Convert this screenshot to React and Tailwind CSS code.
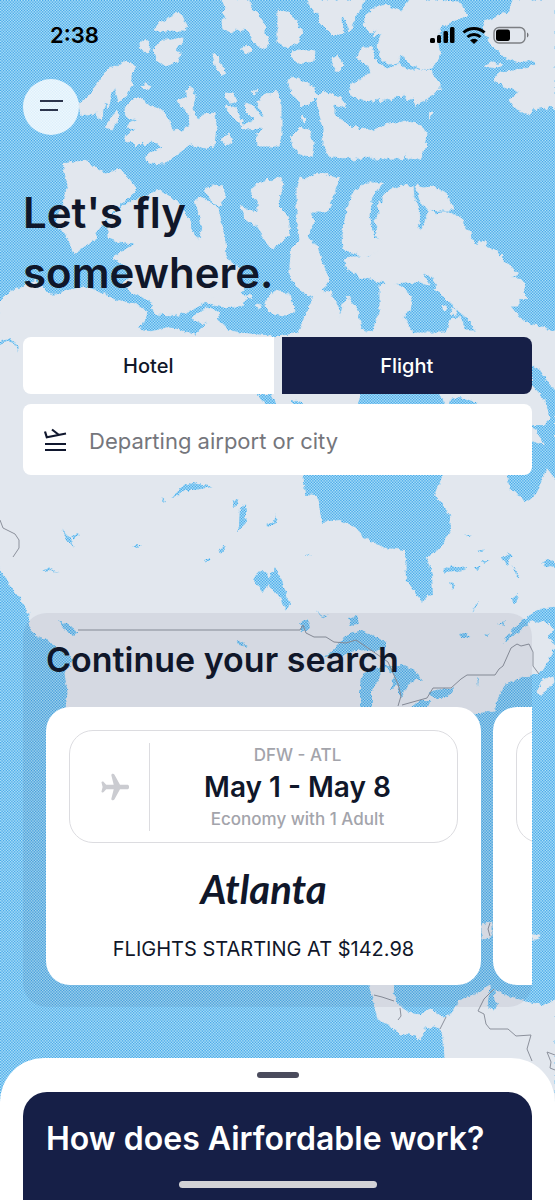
import { useState } from 'react'

const ISLANDS = [
  'M154 30l4-5 2-3 7-2 6-3 2-4 4-1 3 4 4 8-2 7-6 0-6-1-6 1-6 1z',
  'M140 44l5-4 6 8-4 5-6-4z',
  'M154 47l9-7 8 0 12-2-1 5-7 5 5 6-2 7-12 5-9-6z',
  'M222 0l4 9-4 4 4 5-4 3 1 8 9 3 5-3 4 2 4-3 5 5 2 7 5 5 9 4 3-5-4-10 0-9-8-12-5-1-3-12z',
  'M213 52l5 5 2 6 6 10-4 2-4-4-3-5z',
  'M241 49l6-3 5 5-5 3z',
  'M79 103l9-5 6-10 5-6 4-8 6-6 11-3 6-5 3 3 7 4-5 7 0 6 2 6-5 6-5 7-5 3-2-7 0-8-4 5-2 9-2 7-2-6-3 6-1 11-4-1-1-6-6 3-5-2-5 4z',
  'M105 127l7-10 5-6 2 4-3 7-4 7z',
  'M142 86l5-2 5 3-6 3z',
  'M125 110l3-6 5-5 8-2 7 8 9 2 9 8 3 5 3 10 10 1 8-5-1-14-8-6-3-6 9-3 0-7 4-4 4 12-3 12 6 9 7-5 10-1 1 12-2 21-9 2-15-4-14 11-11 9-17-1-2-8 17-8-13-7-5 6-3-5-5 5-5-5-5 1-3-6 14-8-11-1 3-4 9-3-11-2z',
  'M225 93l8 1 4 7-7 2z M226 106l10 2 5 12 5 8-8-6-8-8z M245 103l7 2 10 13-7 2-8-8z M252 92l6-3-4 7z',
  'M262 96l5-3 4 2 4-4 4 5 2 8 0 30-2 12-21 0-1-12 6-6-18 1-5-2 18-8 6-3-8-14 5 0z',
  'M224 136l5-3 3 9-6 4-4-5z',
  'M278 10l12 3 12 19-4 10-11 6-9-6z',
  'M308 0l3 8 9 7-1 7 14 14 10-3-1-15 4 2 4 12 3-10 8-14 4-8z',
  'M363 25l3-9 6-7 13-4 17 7 3-6 5-6 32 0 20 4 5 11-12 5-8 4-7 4-2 16 2 11-8 13-9 1-10-3-6-6-6-5-3 8-10 1-8-7-2-13 4-11-7 3-2-3 6-4-9 3z',
  'M357 58l5-11 9 0 5 15 11 7 13-5 10 6 20 0 4 7 6 6 0 7-6 3-4 5-9 4-5 4-3-8-6 2-3-7-3 5-5-3-4 5-6-3-4 5-4-4-5 3-10-1-12-4-1-10 11-7 10-6-2-7z',
  'M292 52l7-2 16 2-1 9-12 2-9-3z M332 58l6-2 6 10-5 5-5-3z M288 80l10-2 15 9 4 9-8 8-7 1-10-12z',
  'M316 96l9-4 15 6 7 9-13-3 0 10 13 10 5 5 4-4 3 6 3-3 10 3 13-6 18-4 14 3 10 9-2 15-5 11-12-1-2-5-3 6-10-1-21 1-2-3-17 4-2-4-8 2-14-3-6-12 0-15-5-20z',
  'M291 137l9-9 9 2 5 17-2 10-8-1-11-9z M303 116l3 3-1 4-3-3z M430 112l3-1-4 8z',
  'M555 0l-42 0-3 10-15 8-11 4 1 13 7 10 8 7 5 6 15 4 13-2 3 5-11 3-13 3-12 1-6 8 11 6 15 6-11 8 6 8 15 7 4-9 3 5 5-6 4 5 5-4 4 4z',
  'M485 66l8-3 9 2-7 3z',
  'M63 164l12-2 13-1 5 6 12 7 15-5 8 9 9 11-7 7-10 9-10 10-13 15-2 10-12 7-8 7-5-11-5-10-10-8 7-20 6-20z',
  'M120 208l20-10 20-8 20 15 10 15 4 15 6 5 2-15-7-25 5-4 12 9 6 3 7 32 1 18 14 12 4 20-9 8-20-1-20 11-17 7-23-1-5-14-15-6-13-9 11-10-13-13-7-4 12-8 10-6-17-2-10-5 0-17z',
  'M205 190l7-5 10 1 3 9-4 11-8-3z',
  'M240 205l6 5 12 2 0-9-7-13 9-8 3 2 4-5 3 3 8-6 6 9-4 10-2 10 10 10 2 20-12 8-6 7-7-10-7-12-13-10z',
  'M205 302l12-6 22-6 7 8-4 7-16 3-7-2z M277 290l13 5 5 15-10 6-12-2-8-8 4-10z M192 318l14-10 14 4-4 8-14 4z',
  'M297 187l3-10 5 3 12-7 9 1 13 5-6 18-6 15-17 0 4 9-7 15 10 11 5 16 7 15-7 12-10 7-12-8-10-12 0-12 2-17 8-8-3-25z',
  'M342 235l5-25 8-20 12-7 17 0-11 12-4 20 4 20 12 12-12 8-11 2-7-4-12-4z',
  'M378 201l4 3 0-8 8-6 12-5 11 2 1 11 6 17-2 15 6-4 2-9 4-6 7 4 3-3 10 0 12 8 2 7 6 5 1 8 7 5 1-4 6 1 1 5 9 3 4 7 4-2-1 7 9 4 6 9-6 4 8-1 6 6-2 9 5 5-10 1 0 7-8 0 10 12 10 6 15 4 5 9 0 3-70 0-5-15-15-13-13-12-9-10-5-12-11-6 8 13-15-3-20 2-20-4-15-3-13-9-3-8 8-3 18 0 10-7 0-10-5-6 4-7-4-7 4-5z',
  'M416 185l7 3 12-1 12 8 7 15-14 0-12 1-8-11z',
  'M456 296l5-3 2 6-5 2z M442 305l5 2-2 5z M434 290l5-3 2 6z M452 308l4 2 0 5-5-1z M470 322l8 3-3 5z M245 296l4-2 3 4z M255 306l4-2 2 5z',
  'M537 690l6-10 10-3 1 5-8 9-6 4z',
  'M482 925l10-3 0 15-10 1z M532 935l8 0-2 4-6 0z',
  'M368 980l26 0-1 15 6 10 9 8 12 2 10-6 12 8 8-2 12-17 13-3 15-10 0 5-5 5 10-5 15 8 10 2 10 3 15 2 10-5 0 100-110 0 0-42-1-18-3-10-6-4-10 2-6 12-4-5-5-2-10 2-7-8-15-8-3-12z',
]

const MAINLAND =
  'M0 302l10-10 10-4 15-8 8 8 7 7 6 0 14-5 15-3 15 5 15 8 20 4 12 8-2 10-8 6 13 4 20-5 25 8 10-10 10-7 13 12 12 3 38 4 20-4 7-16 12-28 13 3 8 15 2 10 3-12 5-8 9 12 4 20 11 4 8-24 0-23 8-4 17 6 7 13-2 10-7 5 10 17 33 0 4-12 10-5 5 15 92 0 0 275-15 2-15 8-15 13-10 15 10-7 20-15 15 0 7 7-7 7 8 10-6 13-7 12-25 8-15 7-5 14-3 11-22 2-170 70-233-50-4-15 3-25-3-20 10-15-15-7-10-10-15-7-6-10 1-10-9-15-12-15-8-15-5-12-5-3z'

const LAKES = [
  'M303 470l2 25 12 1 5 26 18-2 15 7 10 11 20 10 20 2 1 30 17 22 4-6 6-1-1-20-5-18 13-9 11-18-1-15-10-13-6-7 10-20 5-30-6-46-20-25-32-34-16 22-12 40-36 20z',
  'M532 365l8 5 10 15 5 5 0 90-8-12-7 17-8 14-8 3-8-10-6-2-3-15 8-15 17-20 13 5-13-20 13 0 5-5-5-20-13-15z',
  'M257 394l14 0 6 12-12-1z M358 404l3-12 10 0 3 13z M409 392l18-2 14 16-28 0z M450 400l10-3 18 6-6 6-24-2z M291 400l12 2 0 4-12-1z',
  'M325 657l13-12 6-8 6-4 12-3 12 6 12 6 0 6-10 3-20-1-14 6z',
  'M360 710l0-25 4-13 14-4 7-4-7 16-6 10 0 20z M380 664l15 4 6-3 14 5 8 10-8 0-7 5-5 10-3 3-3-13-7 7 4-17z M410 708l10-8 12 0-6 8z M428 693l7-3 18-2-5 10-15 0z',
  'M253 580l4-7 5-3 6 5 0 5 7-12 7 12 3 10 5 15-4 7-5-12-6-8-7-8-5 8z',
  'M172 498l11-13 10-2 20 4-18 3-10 0-9 7z M163 498l2 3-3 1z M232 502l5-3 1 4-5 5z M240 508l6-4 1 8-3 14-8 6 3-10z M204 560l6-2 1 3-5 2z M266 525l8-3 2-8 2 8-10 6z M219 549l5-3 1 3-4 5z M265 396l8 1 3 4-8 0z',
  'M443 570l10-5 8 3-6 4-10 1z M455 568l12-2-2 4-10 1z M475 567l6 0-4 3z M481 560l8 0-5 4z M502 557l8-4 2 3-5 4 1 5-4-3z M512 566l8 12-4-3z M541 563l6-4 8 2 0 6-8-1z M450 583l5 2-3 5z M472 613l7-11-3 2z M464 534l8 2-3 1z M477 551l8-2-5 4z M512 598l5-4 1 8-4 2z M304 557l8-3-4 3z',
  'M58 620l12 6 8 7-4 3-9-6z M300 622l8-2 2 8-8 4z M349 618l7-3 2 9-8 1z M459 634l8-1 3 4-9 1z M484 634l6-1-3 3z M498 624l7-3-2 5z M316 610l6 6 7-2-7 4z M235 640l5 1 8 6-9-2z M477 677l2 2-1 8z',
  'M61 528l10 12 3 8-7-9z M70 536l10-2-6 5z M131 545l10 0-4 2z M43 571l4-4 12 6-8-3z M0 342l10-4 6 5 3 10-5-9-6-3-8 4z',
  'M490 992l2-6 3 1-1 12 4 6-5 6-6-6z',
]

const BORDERS =
  'M0 520l3 8 12 6 4 6 0 8-6 9 M78 630l222 0 3-5 3 8 8 4 12 0 8 5 12 1 10-3 12 8 20 14 10 22 3 12-3 10 M402 705l25-7 6-10 18 0 10-9 6-4 28 0 4-6 4-3 8-18 6-4 4 2 8-2 4 8 0 14 6 8 M374 995l8 2 12 4 M400 1008l1 8-3 4 M446 1017l-4 8-2 4 M494 989l-10 10-6 12 6 3 2 10 4 5 18 0 8 7 15-1-4 14 5 12 M547 1052l8 3 M547 1052l4 10-1 6 5 2 M490 923l-2 6 2 7'

function WorldMap() {
  return (
    <svg
      className="absolute inset-0 h-full w-full"
      viewBox="0 0 555 1200"
      preserveAspectRatio="xMidYMin slice"
      aria-hidden="true"
    >
      <defs>
        {/* checkered sea, 14px tile holding five 2.8px checks */}
        <pattern id="sea" width="14" height="14" patternUnits="userSpaceOnUse">
          <rect width="14" height="14" fill="#aee1f8" />
          {[0, 1, 2, 3, 4, 5, 6, 7, 8, 9].map((row) =>
            [0, 1, 2, 3, 4].map((col) => (
              <rect
                key={`${row}-${col}`}
                x={col * 2.8 + (row % 2) * 1.4}
                y={row * 1.4}
                width="1.400"
                height="1.400"
                fill="#4aa9e9"
              />
            )),
          )}
        </pattern>
        <filter id="coast" x="0" y="0" width="100%" height="100%">
          <feTurbulence type="fractalNoise" baseFrequency="0.2" numOctaves="2" seed="4" />
          <feDisplacementMap in="SourceGraphic" scale="5" xChannelSelector="R" yChannelSelector="G" />
        </filter>
        <mask id="land" maskUnits="userSpaceOnUse" x="-20" y="-20" width="600" height="1240">
          <g filter="url(#coast)">
            <rect x="-20" y="-20" width="600" height="1240" fill="#000" />
            <path d={MAINLAND} fill="#fff" stroke="#fff" />
            {ISLANDS.map((d) => (
              <path key={d} d={d} fill="#fff" stroke="#fff" />
            ))}
            {LAKES.map((d) => (
              <path key={d} d={d} fill="#000" />
            ))}
          </g>
        </mask>
      </defs>
      <rect width="555" height="1200" fill="url(#sea)" />
      <rect width="555" height="1200" fill="#e2e7ee" mask="url(#land)" />
      <path d={BORDERS} fill="none" stroke="#8c919c" strokeWidth="1" />
    </svg>
  )
}

function StatusBar() {
  return (
    <div className="flex h-[71px] items-center justify-between pr-[26px] pl-[50px] text-black">
      <span className="text-[22px] font-semibold">2:38</span>
      <svg className="h-5 w-[100px]" viewBox="0 0 100 20" aria-hidden="true">
        <rect x="1" y="12" width="5" height="5" rx="1.500" />
        <rect x="8" y="9" width="4" height="8" rx="1.500" />
        <rect x="14.500" y="5" width="4.500" height="12" rx="1.500" />
        <rect x="21" y="1" width="4.500" height="16" rx="1.500" />
        <g fill="none" stroke="#000" strokeWidth="3">
          <path d="M34.500 6.500a15.500 15.500 0 0 1 21 0" />
          <path d="M38.500 11a9.500 9.500 0 0 1 13 0" />
        </g>
        <path d="M41 14.200a6 6 0 0 1 8 0L45 18z" />
        <rect x="65" y="1.500" width="31" height="15.500" rx="5" fill="none" stroke="#000" strokeOpacity=".45" strokeWidth="1.400" />
        <rect x="67" y="3.500" width="14" height="11.500" rx="2.500" />
        <path d="M98 6.500v5c2-.7 2-4.300 0-5z" opacity=".5" />
      </svg>
    </div>
  )
}

function DepartIcon() {
  return (
    <svg className="h-6 w-6 shrink-0" viewBox="0 0 24 24" fill="none" stroke="#10172e" strokeWidth="2.200" aria-hidden="true">
      <path d="M2 16h21M2 22h21" />
      <path d="M2 3.500l1.800 5.800L23 5.500" />
      <path d="M9 1.500l7 5.500" />
    </svg>
  )
}

function PlaneIcon() {
  return (
    <svg className="h-7 w-7" viewBox="0 0 28 28" fill="#cbccd1" aria-hidden="true">
      <path d="M26 11.700h-7L13.500 1.800C13.100 1.100 12.600.7 11.800.7c-1 0-1.700.8-1.400 1.800l2.300 9.200H5.200L2.700 8.900C2.200 8.300.3 8.500.5 9.500L1.600 14 .5 18.500c-.2 1 1.700 1.200 2.200.6l2.500-2.800h7.500l-2.300 9.200c-.3 1 .4 1.800 1.400 1.800.8 0 1.300-.4 1.700-1.100l5.500-9.900h7c1.300 0 2.200-1 2.200-2.300s-.9-2.300-2.200-2.300z" />
    </svg>
  )
}

function TripCard({ route, dates, cabin, city, price }) {
  return (
    <article className="w-[435px] shrink-0 rounded-3xl bg-white px-[23px] pt-[23px] pb-[22px] text-center">
      <div className="flex h-[113px] items-center rounded-3xl border border-[#dcdce0]">
        <div className="flex h-[88px] w-20 items-center justify-end border-r border-[#dcdce0] pr-5">
          <PlaneIcon />
        </div>
        <div className="flex-1 pr-3">
          <p className="text-[17px] leading-7 font-medium text-[#a3a4ab]">{route}</p>
          <p className="text-[28px] leading-9 font-semibold text-[#10172a]">{dates}</p>
          <p className="text-[17px] leading-7 font-medium text-[#a3a4ab]">{cabin}</p>
        </div>
      </div>
      <h3 className="mt-4 font-['Lato',cursive] text-[40px] leading-[60px] font-bold text-[#10172a] italic">{city}</h3>
      <p className="mt-4 text-xl leading-7 text-[#10172a] uppercase">{price}</p>
    </article>
  )
}

const TRIPS = [
  { id: 1, route: 'DFW - ATL', dates: 'May 1 - May 8', cabin: 'Economy with 1 Adult', city: 'Atlanta', price: 'Flights starting at $142.98' },
  { id: 2 },
]

export default function App() {
  const [mode, setMode] = useState('Flight')

  return (
    <div className="relative flex min-h-screen flex-col overflow-hidden bg-[#7cc5f0] font-['Inter',sans-serif]">
      <WorldMap />

      <div className="relative">
        <StatusBar />
        <main className="px-[23px]">
          <button aria-label="Menu" className="mt-2 flex h-14 w-14 items-center justify-center rounded-full bg-white/80">
            <svg className="h-6 w-6" viewBox="0 0 24 24" stroke="#2b344c" strokeWidth="2" aria-hidden="true">
              <path d="M1 6h23M1 15h18" />
            </svg>
          </button>

          <h1 className="mt-12 text-[42px] leading-[60px] font-semibold text-[#10172a]">
            Let's fly
            <br />
            somewhere.
          </h1>

          <div className="mt-[34px] flex gap-2">
            {['Hotel', 'Flight'].map((name) => (
              <button
                key={name}
                onClick={() => setMode(name)}
                className={`h-[57px] flex-1 text-xl font-medium first:rounded-l-lg last:rounded-r-lg ${
                  mode === name ? 'bg-[#161f47] text-white' : 'bg-white text-[#10172a]'
                }`}
              >
                {name}
              </button>
            ))}
          </div>

          <label className="mt-[10px] flex h-[71px] items-center gap-[22px] rounded-lg bg-white px-5">
            <DepartIcon />
            <input
              aria-label="Departing airport or city"
              placeholder="Departing airport or city"
              className="h-full min-w-0 flex-1 pt-0.5 text-[22px] outline-none placeholder:text-[#75767c]"
            />
          </label>

          {/* Recent searches */}
          <section className="mt-[138px] overflow-hidden rounded-3xl bg-[#000820]/6 pt-[23px] pb-[22px] pl-[23px]">
            <h2 className="text-[34px] leading-[48px] font-semibold text-[#10172a]">Continue your search</h2>
            <div className="mt-[23px] flex gap-3">
              {TRIPS.map((trip) => (
                <TripCard key={trip.id} {...trip} />
              ))}
            </div>
          </section>
        </main>
      </div>

      {/* Bottom sheet */}
      <div className="relative mt-[51px] flex flex-1 flex-col rounded-t-[44px] bg-white px-[23px] pt-[14px]">
        <div className="mx-auto h-[6px] w-[42px] rounded-full bg-[#4a4b5c]" />
        <div className="mt-[14px] flex-1 rounded-t-3xl bg-[#161f47] px-[23px] pt-[23px] pb-2">
          <h2 className="text-[32px] leading-[48px] font-semibold text-white">How does Airfordable work?</h2>
          <div className="mx-auto mt-[18px] h-[7px] w-[198px] rounded-full bg-[#d2d2d6]" />
        </div>
      </div>
    </div>
  )
}
